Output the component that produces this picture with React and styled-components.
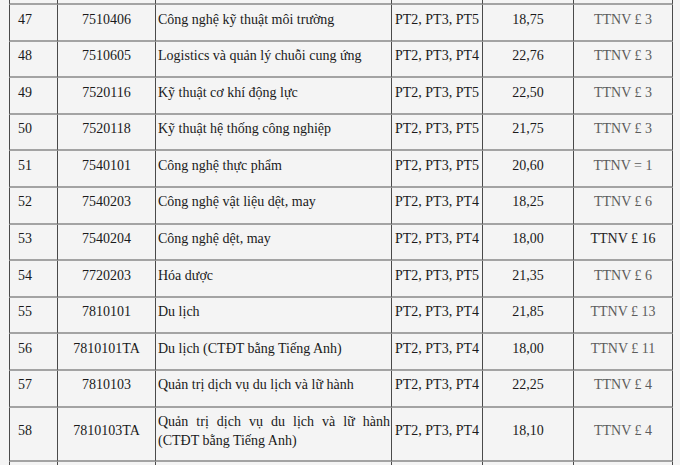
import React from 'react';
import styled, { createGlobalStyle } from 'styled-components';

const GlobalStyle = createGlobalStyle`
  html, body {
    margin: 0;
    padding: 0;
    background: #f4f4f4;
    overflow: hidden;
  }
  body {
    height: 465px;
  }
`;

const Page = styled.div`
  padding-left: 9px;
  font-family: "Liberation Serif", "Times New Roman", serif;
  font-size: 14px;
  color: #1a1a1a;
`;

const Table = styled.table`
  table-layout: fixed;
  border-collapse: separate;
  border-spacing: 0;
  width: 664px;
`;

const Cell = styled.td`
  border-right: 1px solid #4a4a4a;
  border-bottom: 2px solid #a3a3a3;
  padding: 4.5px 2px 11.1px;
  line-height: 19px;
  vertical-align: middle;
  text-align: ${(p) => p.$align || 'left'};
  white-space: nowrap;
  overflow: hidden;

  &:first-child {
    border-left: 1px solid #4a4a4a;
    padding-left: 8px;
  }
`;

const NameCell = styled(Cell)`
  padding-left: 2px;
  padding-right: 1px;
  padding-bottom: ${(p) => (p.$long ? '9.5px' : '11.1px')};
  vertical-align: ${(p) => (p.$long ? 'top' : 'middle')};
  text-align: justify;
  white-space: normal;
`;

const MethodCell = styled(Cell)`
  padding-left: 3px;
  padding-right: 0;
`;

const RankCell = styled(Cell)`
  color: ${(p) => (p.$dark ? '#222' : '#5c5c5c')};
`;

const CutCell = styled.td`
  border-right: 1px solid #4a4a4a;
  border-bottom: 2px solid #a3a3a3;
  padding: 0;
  height: 3px;

  &:first-child {
    border-left: 1px solid #4a4a4a;
  }
`;

const TailCell = styled(CutCell)`
  height: 30px;
  border-bottom: none;
`;

const rows = [
  ['47', '7510406', 'Công nghệ kỹ thuật môi trường', 'PT2, PT3, PT5', '18,75', 'TTNV £ 3'],
  ['48', '7510605', 'Logistics và quản lý chuỗi cung ứng', 'PT2, PT3, PT4', '22,76', 'TTNV £ 3'],
  ['49', '7520116', 'Kỹ thuật cơ khí động lực', 'PT2, PT3, PT5', '22,50', 'TTNV £ 3'],
  ['50', '7520118', 'Kỹ thuật hệ thống công nghiệp', 'PT2, PT3, PT5', '21,75', 'TTNV £ 3'],
  ['51', '7540101', 'Công nghệ thực phẩm', 'PT2, PT3, PT5', '20,60', 'TTNV = 1'],
  ['52', '7540203', 'Công nghệ vật liệu dệt, may', 'PT2, PT3, PT4', '18,25', 'TTNV £ 6'],
  ['53', '7540204', 'Công nghệ dệt, may', 'PT2, PT3, PT4', '18,00', 'TTNV £ 16', true],
  ['54', '7720203', 'Hóa dược', 'PT2, PT3, PT5', '21,35', 'TTNV £ 6'],
  ['55', '7810101', 'Du lịch', 'PT2, PT3, PT4', '21,85', 'TTNV £ 13'],
  ['56', '7810101TA', 'Du lịch (CTĐT bằng Tiếng Anh)', 'PT2, PT3, PT4', '18,00', 'TTNV £ 11'],
  ['57', '7810103', 'Quản trị dịch vụ du lịch và lữ hành', 'PT2, PT3, PT4', '22,25', 'TTNV £ 4'],
  ['58', '7810103TA', 'Quản trị dịch vụ du lịch và lữ hành (CTĐT bằng Tiếng Anh)', 'PT2, PT3, PT4', '18,10', 'TTNV £ 4'],
];

const widths = [49, 98, 236, 91, 91, 99];

function App() {
  return (
    <Page>
      <GlobalStyle />
      <Table>
        <colgroup>
          { widths.map((w, i) => <col key={ i } style={ { width: `${w}px` } } />) }
        </colgroup>
        <tbody>
          <tr>
            { widths.map((w, i) => <CutCell key={ i } />) }
          </tr>
          { rows.map(([no, code, name, methods, score, rank, dark]) => (
            <tr key={ no }>
              <Cell>{ no }</Cell>
              <Cell $align="center">{ code }</Cell>
              <NameCell $long={ name.length > 40 }>{ name }</NameCell>
              <MethodCell>{ methods }</MethodCell>
              <Cell $align="center">{ score }</Cell>
              <RankCell $align="center" $dark={ dark }>{ rank }</RankCell>
            </tr>
          )) }
          <tr>
            { widths.map((w, i) => <TailCell key={ i } />) }
          </tr>
        </tbody>
      </Table>
    </Page>
  );
}

export default App;
